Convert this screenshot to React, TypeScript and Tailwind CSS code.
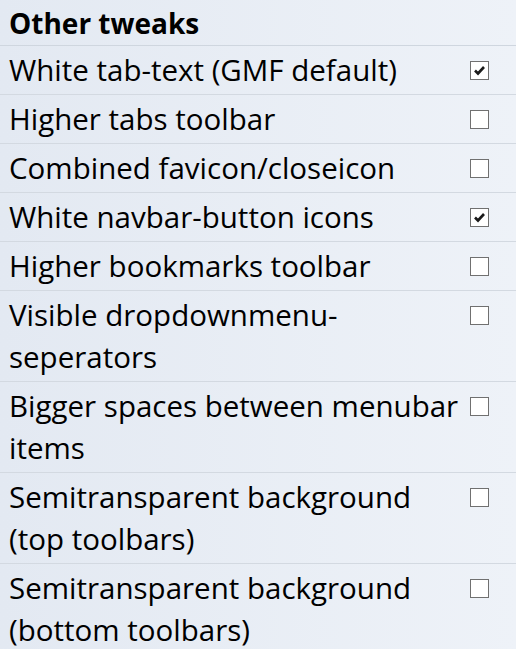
const ROWS: { label: string; checked: boolean }[] = [
  { label: "White tab-text (GMF default)", checked: true },
  { label: "Higher tabs toolbar", checked: false },
  { label: "Combined favicon/closeicon", checked: false },
  { label: "White navbar-button icons", checked: true },
  { label: "Higher bookmarks toolbar", checked: false },
  { label: "Visible dropdownmenu-seperators", checked: false },
  { label: "Bigger spaces between menubar items", checked: false },
  { label: "Semitransparent background (top toolbars)", checked: false },
  { label: "Semitransparent background (bottom toolbars)", checked: false },
];

function Box({ checked }: { checked: boolean }) {
  return (
    <span className="flex h-[19px] w-[19px] items-center justify-center border border-[#707070] bg-white">
      {checked && (
        <svg width="13" height="11" viewBox="0 0 13 11">
          <path d="M2 5.5 L5 8.5 L11 2" fill="none" stroke="#1a1a1a" strokeWidth="2.6" />
        </svg>
      )}
    </span>
  );
}

export default function App() {
  return (
    <div className="h-[649px] w-[516px] overflow-hidden bg-gradient-to-r from-[#e3e9f2] to-[#eef2f8] font-['Open_Sans',sans-serif] text-black">
      <div className="h-[46px] border-b border-[#cfd6df] pl-[9px] pt-[3px] text-[28px] font-bold leading-[40px]">
        Other tweaks
      </div>
      {ROWS.map((r) => (
        <div key={r.label} className="flex items-start border-b border-[#d3d9e1] py-[3px] pl-[9px] pr-[27px]">
          <div className="w-[455px] text-[29.5px] leading-[42px]">{r.label}</div>
          <div className="ml-auto pt-[12px]">
            <Box checked={r.checked} />
          </div>
        </div>
      ))}
    </div>
  );
}
